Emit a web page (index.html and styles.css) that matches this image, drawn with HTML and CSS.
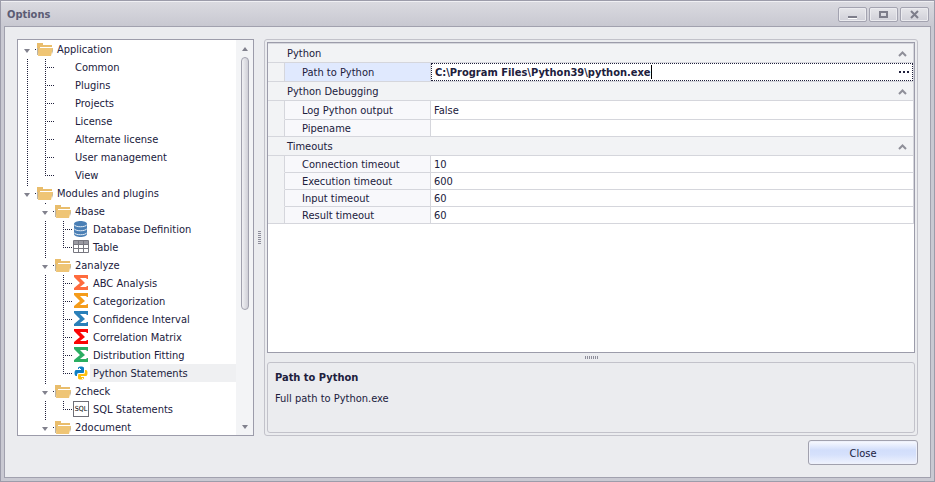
FILE: index.html
```html
<!DOCTYPE html>
<html lang="en">
<head>
    <meta charset="UTF-8">
    <meta name="viewport" content="width=device-width, initial-scale=1.0">
    <title>Options</title>
    <link rel="stylesheet" href="styles.css">
</head>
<body>
    <!-- Shared icons -->
    <svg class="sprite" aria-hidden="true">
        <symbol id="folder" viewBox="0 0 18 18">
            <path fill="#e9bd6c" d="M1 3h6v2h9v2H5L2 15H1z"/>
            <path fill="#b9b3a6" d="M1 8h1v7H1zM16 8h1v3l-1 3z"/>
            <path fill="#efc575" d="M3 8h14l-2 8H2z"/>
            <path fill="#fff" d="M4 7h12v1H4z"/>
        </symbol>
        <symbol id="sigma" viewBox="0 0 18 18">
            <path fill="currentColor" d="M2 1h14v4h-1l-1-1H8l5 5-5 4h6l1-1h1v4H2v-2l6-5-6-6z"/>
        </symbol>
        <symbol id="database" viewBox="0 0 18 18">
            <path fill="#4a7fb5" d="M2 4c0-4 13-4 13 0v10c0 4-13 4-13 0z"/>
            <path fill="none" stroke="#e4ecf4" d="M2 4.500c1 3 12 3 13 0M2 8.500c1 3 12 3 13 0M2 12.500c1 3 12 3 13 0"/>
        </symbol>
        <symbol id="grid" viewBox="0 0 18 18">
            <path fill="#fff" stroke="#777780" d="M1.500 2.500h15v12h-15z"/>
            <path fill="#9a9aa2" d="M2 3h14v3H2z"/>
            <path fill="none" stroke="#777780" d="M2 6.500h14M2 10.500h14M6.500 3v11M11.500 3v11"/>
        </symbol>
        <symbol id="python" viewBox="0 0 18 18">
            <path fill="#0f7fc4" d="M6 5V4c0-2 6-2 6 0v4c0 1-1 1-1 1H7c-2 0-2 1-2 3H4C2 12 2 6 4 6h5V5z"/>
            <path fill="#fdc010" d="M13 6h1c2 0 2 6 0 6H9v1h3v1c0 2-6 2-6 0v-3c0-1 1-1 1-1h4c2 0 2-1 2-4z"/>
            <path fill="#fff" d="M7 4h1v1H7zM10 14h1v1h-1z"/>
        </symbol>
        <symbol id="chevron" viewBox="0 0 9 6">
            <path fill="none" stroke="#8f8f99" stroke-width="2" d="M1 5l3.500-3.500L8 5"/>
        </symbol>
    </svg>

    <div class="window">
        <header class="titlebar">
            <h1>Options</h1>
            <button class="caption-button" type="button" aria-label="Minimize">
                <svg width="11" height="9"><path fill="#fff" d="M1 8h9v1H1z"/><path fill="#7d7d8a" d="M1 6h9v2H1z"/></svg>
            </button>
            <button class="caption-button" type="button" aria-label="Maximize">
                <svg width="11" height="9"><path fill="none" stroke="#7d7d8a" stroke-width="2" d="M2 2h7v5H2z"/></svg>
            </button>
            <button class="caption-button" type="button" aria-label="Close window">
                <svg width="11" height="9"><path fill="none" stroke="#7d7d8a" stroke-width="2" d="M2 1l7 7M9 1l-7 7"/></svg>
            </button>
        </header>

        <div class="client">
            <main class="panes">
                <nav class="tree-box">
                    <ul class="tree">
                        <li><i class="toggle first"></i><svg><use href="#folder"/></svg><span>Application</span></li>
                        <li><i class="line"></i><i class="branch"></i><i class="blank"></i><span>Common</span></li>
                        <li><i class="line"></i><i class="branch"></i><i class="blank"></i><span>Plugins</span></li>
                        <li><i class="line"></i><i class="branch"></i><i class="blank"></i><span>Projects</span></li>
                        <li><i class="line"></i><i class="branch"></i><i class="blank"></i><span>License</span></li>
                        <li><i class="line"></i><i class="branch"></i><i class="blank"></i><span>Alternate license</span></li>
                        <li><i class="line"></i><i class="branch"></i><i class="blank"></i><span>User management</span></li>
                        <li><i class="line"></i><i class="branch last"></i><i class="blank"></i><span>View</span></li>
                        <li><i class="toggle"></i><svg><use href="#folder"/></svg><span>Modules and plugins</span></li>
                        <li><i class="blank"></i><i class="toggle"></i><svg><use href="#folder"/></svg><span>4base</span></li>
                        <li><i class="blank"></i><i class="line"></i><i class="branch"></i><svg><use href="#database"/></svg><span>Database Definition</span></li>
                        <li><i class="blank"></i><i class="line"></i><i class="branch last"></i><svg><use href="#grid"/></svg><span>Table</span></li>
                        <li><i class="blank"></i><i class="toggle"></i><svg><use href="#folder"/></svg><span>2analyze</span></li>
                        <li><i class="blank"></i><i class="line"></i><i class="branch"></i><svg class="coral"><use href="#sigma"/></svg><span>ABC Analysis</span></li>
                        <li><i class="blank"></i><i class="line"></i><i class="branch"></i><svg class="amber"><use href="#sigma"/></svg><span>Categorization</span></li>
                        <li><i class="blank"></i><i class="line"></i><i class="branch"></i><svg class="blue"><use href="#sigma"/></svg><span>Confidence Interval</span></li>
                        <li><i class="blank"></i><i class="line"></i><i class="branch"></i><svg class="red"><use href="#sigma"/></svg><span>Correlation Matrix</span></li>
                        <li><i class="blank"></i><i class="line"></i><i class="branch"></i><svg class="green"><use href="#sigma"/></svg><span>Distribution Fitting</span></li>
                        <li><i class="blank"></i><i class="line"></i><i class="branch last"></i><svg><use href="#python"/></svg><span class="selected">Python Statements</span></li>
                        <li><i class="blank"></i><i class="toggle"></i><svg><use href="#folder"/></svg><span>2check</span></li>
                        <li><i class="blank"></i><i class="line"></i><i class="branch last"></i><b class="sql">SQL</b><span>SQL Statements</span></li>
                        <li><i class="blank"></i><i class="toggle"></i><svg><use href="#folder"/></svg><span>2document</span></li>
                    </ul>
                    <div class="scrollbar">
                        <i class="arrow up"></i>
                        <div class="track"><div class="thumb"></div></div>
                        <i class="arrow down"></i>
                    </div>
                </nav>

                <div class="splitter vertical"><i></i></div>

                <section class="properties">
                    <div class="grid-box">
                        <table>
                            <colgroup><col class="col-indent"><col class="col-name"><col></colgroup>
                            <tbody>
                                <tr class="category"><th colspan="3"><div>Python <svg><use href="#chevron"/></svg></div></th></tr>
                                <tr class="tall focused">
                                    <td></td>
                                    <th><label for="python-path">Path to Python</label></th>
                                    <td>
                                        <div class="editor">
                                            <input id="python-path" type="text" value="C:\Program Files\Python39\python.exe" spellcheck="false">
                                            <button type="button" aria-label="Browse"><i></i><i></i><i></i></button>
                                        </div>
                                    </td>
                                </tr>
                            </tbody>
                            <tbody>
                                <tr class="category"><th colspan="3"><div>Python Debugging <svg><use href="#chevron"/></svg></div></th></tr>
                                <tr class="tall"><td></td><th>Log Python output</th><td>False</td></tr>
                                <tr><td></td><th>Pipename</th><td></td></tr>
                            </tbody>
                            <tbody>
                                <tr class="category"><th colspan="3"><div>Timeouts <svg><use href="#chevron"/></svg></div></th></tr>
                                <tr><td></td><th>Connection timeout</th><td>10</td></tr>
                                <tr><td></td><th>Execution timeout</th><td>600</td></tr>
                                <tr><td></td><th>Input timeout</th><td>60</td></tr>
                                <tr><td></td><th>Result timeout</th><td>60</td></tr>
                            </tbody>
                        </table>
                    </div>
                    <div class="splitter horizontal"><i></i></div>
                    <div class="description">
                        <h2>Path to Python</h2>
                        <p>Full path to Python.exe</p>
                    </div>
                </section>
            </main>

            <footer>
                <button class="close-button" type="button">Close</button>
            </footer>
        </div>
    </div>
</body>
</html>
```
FILE: styles.css
```css
* {
    box-sizing: border-box;
}
body {
    margin: 0;
    font-family: "DejaVu Sans Condensed", "DejaVu Sans", sans-serif;
    font-size: 11px;
    line-height: 18px;
    color: #20203c;
}
button, input {
    font: inherit;
    color: inherit;
}
.sprite {
    position: absolute;
    width: 0;
    height: 0;
}

/* Window frame */
.window {
    display: flex;
    flex-direction: column;
    height: 100vh;
    padding: 0 3px 3px;
    border: 1px solid #9c9caa;
    background-color: #c9c9d2;
}
.titlebar {
    display: flex;
    align-items: center;
    gap: 2px;
    height: 25px;
    flex: none;
    margin: 0 -3px;
    padding: 0 5px 0 6px;
    border-top: 1px solid #f0f0f4;
    background: linear-gradient(#dadae0, #c8c8d1);
}
.titlebar h1 {
    flex: 1;
    margin: 0;
    padding-top: 2px;
    font-size: 11px;
    color: #5c5c74;
}
.caption-button {
    display: flex;
    align-items: center;
    justify-content: center;
    width: 29px;
    height: 15px;
    padding: 0;
    border: 1px solid #a3a3b0;
    border-radius: 2px;
    background: linear-gradient(#e6e6ea, #d0d0d8);
    box-shadow: inset 0 0 0 1px #ebebef;
}
.client {
    flex: 1;
    display: flex;
    flex-direction: column;
    gap: 4px;
    min-height: 0;
    padding: 12px;
    border: 1px solid #a1a1ae;
    background-color: #ebecef;
}
.panes {
    flex: 1;
    display: flex;
    min-height: 0;
}

/* Tree */
.tree-box {
    display: flex;
    width: 237px;
    flex: none;
    border: 1px solid #9c9caa;
    background-color: #fff;
}
.tree {
    flex: 1;
    margin: 0;
    padding: 0;
    list-style: none;
    overflow: auto;
    scrollbar-width: none;
}
.tree li {
    display: flex;
    height: 18px;
    line-height: 20px;
}
.tree li > i, .tree li > svg {
    flex: none;
    width: 18px;
    height: 18px;
}
.tree span {
    padding-left: 3px;
    white-space: nowrap;
}
.tree .selected {
    flex: 1;
    background-color: #eff0f2;
}
.line {
    background: repeating-linear-gradient(#20203c 0 1px, transparent 1px 2px) 9px 1px / 1px 18px no-repeat;
}
.branch {
    background:
        repeating-linear-gradient(#20203c 0 1px, transparent 1px 2px) 9px 1px / 1px 18px no-repeat,
        repeating-linear-gradient(90deg, #20203c 0 1px, transparent 1px 2px) 9px 9px / 9px 1px no-repeat;
}
.branch.last {
    background-size: 1px 9px, 9px 1px;
}
.toggle {
    display: flex;
    align-items: center;
    justify-content: center;
    padding: 3px 1px 0 0;
    background:
        linear-gradient(#20203c, #20203c) 9px 1px / 1px 1px no-repeat,
        linear-gradient(#20203c, #20203c) 17px 9px / 1px 1px no-repeat;
}
.toggle.first {
    background: linear-gradient(#20203c, #20203c) 17px 9px / 1px 1px no-repeat;
}
.toggle::before, .arrow::before {
    content: "";
    border: 3px solid transparent;
    border-top: 4px solid #81818d;
    border-bottom: 0;
}
.sql {
    flex: none;
    width: 16px;
    height: 16px;
    margin: 1px;
    border: 1px solid #6e6e76;
    font-size: 7px;
    font-weight: normal;
    line-height: 14px;
    text-align: center;
    color: #000;
}
.coral { color: #ff6b3d; }
.amber { color: #f59c1a; }
.blue { color: #2a80b9; }
.red { color: #fb0505; }
.green { color: #2aae62; }

.scrollbar {
    display: flex;
    flex-direction: column;
    width: 17px;
    background-color: #f3f4f6;
}
.arrow {
    display: flex;
    align-items: center;
    justify-content: center;
    height: 17px;
}
.arrow.up::before {
    border-top: 0;
    border-bottom: 4px solid #81818d;
}
.track {
    flex: 1;
    padding: 0 4px 0 5px;
}
.thumb {
    height: 70%;
    border: 1px solid #a1a1ae;
    border-radius: 4px;
    background: linear-gradient(90deg, #f1f1f4, #cfcfd7);
}

/* Splitters */
.splitter {
    display: flex;
    align-items: center;
    justify-content: center;
    flex: none;
}
.splitter.vertical {
    width: 10px;
}
.splitter.vertical i {
    width: 3px;
    height: 13px;
    background: repeating-linear-gradient(#8d8d9a 0 1px, transparent 1px 2px);
}
.splitter.horizontal {
    height: 9px;
}
.splitter.horizontal i {
    width: 13px;
    height: 3px;
    background: repeating-linear-gradient(90deg, #8d8d9a 0 1px, transparent 1px 2px);
}

/* Property grid */
.properties {
    flex: 1;
    display: flex;
    flex-direction: column;
    min-width: 0;
    padding: 2px;
    border: 1px solid #c2c2ca;
    border-radius: 3px;
}
.grid-box {
    flex: 1;
    min-height: 0;
    overflow: hidden;
    border: 1px solid #9c9caa;
    background-color: #fff;
}
table {
    width: 100%;
    table-layout: fixed;
    border-collapse: separate;
    border-spacing: 0;
    border-top: 1px solid #d5d6dc;
    border-right: 1px solid #d5d6dc;
}
.col-indent {
    width: 17px;
}
.col-name {
    width: 146px;
}
th, td {
    height: 17px;
    padding: 2px 0 0 3px;
    border-bottom: 1px solid #d5d6dc;
    font-weight: normal;
    line-height: 14px;
    text-align: left;
}
tr > td:first-child {
    border-right: 1px solid #d5d6dc;
    border-bottom-color: #f2f3f5;
    background-color: #f2f3f5;
}
tr:last-child > td:first-child {
    border-bottom-color: #d5d6dc;
}
td + th {
    padding-left: 17px;
    border-right: 1px solid #d5d6dc;
    background-color: #f8f8fb;
}
.tall > *, .category > * {
    height: 19px;
    line-height: 16px;
}
.category th {
    padding: 2px 6px 0 19px;
    background-color: #f2f3f5;
}
.category div {
    display: flex;
    align-items: center;
    justify-content: space-between;
}
.category svg {
    width: 9px;
    height: 6px;
}
.focused th {
    background-color: #e0e9fe;
}
.focused td + th + td {
    padding: 0;
}
.editor {
    display: flex;
    align-items: center;
    justify-content: space-between;
    height: 18px;
    padding: 0 3px;
    border: 1px dotted #20203c;
}
.editor input {
    field-sizing: content;
    height: 14px;
    padding: 1px 0 0;
    border: 0;
    border-right: 1px solid #000;
    outline: none;
    background: none;
    font-weight: bold;
}
.editor button {
    display: flex;
    gap: 2px;
    padding: 0;
    border: 0;
    background: none;
}
.editor button i {
    width: 2px;
    height: 2px;
    background-color: #20203c;
}

/* Description */
.description {
    height: 71px;
    flex: none;
    padding: 6px 7px;
    border: 1px solid #c2c2ca;
    border-radius: 3px;
}
.description h2 {
    margin: 0 0 3px;
    font-size: 11px;
}
.description p {
    margin: 0;
}

footer {
    display: flex;
    justify-content: flex-end;
}
.close-button {
    width: 110px;
    height: 25px;
    padding: 2px 0 0;
    border: 1px solid #a1a1ae;
    border-radius: 3px;
    background: linear-gradient(#fafbff, #d2defb 40%, #d6e1fc 60%, #f0f3fd);
    box-shadow: inset 0 0 0 1px #eef1fb;
}
```
